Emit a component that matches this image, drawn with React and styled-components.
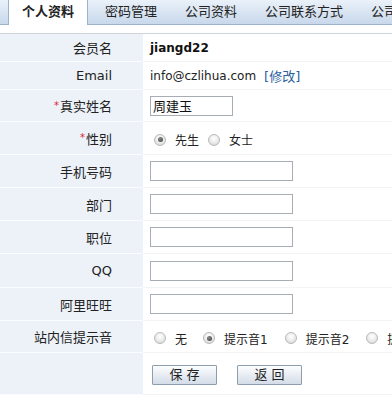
import React from 'react';
import styled, { createGlobalStyle } from 'styled-components';

const GlobalStyle = createGlobalStyle`
  body {
    margin: 0;
    background: #ffffff;
    font-family: 'DejaVu Sans', 'Noto Sans CJK SC', sans-serif;
    font-size: 12px;
    color: #222;
  }
`;

const Page = styled.div`
  width: 392px;
  height: 398px;
  overflow: hidden;
`;

const TabBar = styled.div`
  display: flex;
  height: 24px;
  padding-left: 8px;
  background: linear-gradient(#eaf1f9, #c8d8eb);
  border-bottom: 1px solid #9db2cb;
  white-space: nowrap;
`;

const Tab = styled.div`
  flex: none;
  padding: 0 14px;
  line-height: 24px;
  font-size: 13px;
  color: #222;
  ${(p) =>
    p.$active &&
    `
    height: 25px;
    margin-right: 3px;
    padding: 0 13px;
    background: #ffffff;
    font-weight: bold;
    border-left: 1px solid #9db2cb;
    border-right: 1px solid #9db2cb;
  `}
`;

const Form = styled.div`
  margin-top: 8px;
  border-top: 1px solid #cfd4da;
`;

const Row = styled.div`
  display: grid;
  grid-template-columns: 143px 1fr;
  height: ${(p) => p.$h}px;
`;

const Label = styled.div`
  display: flex;
  align-items: center;
  justify-content: flex-end;
  padding-right: 31px;
  background: #edf2f9;
  border-bottom: 1px solid #fafcff;
  font-size: 13px;
  color: #222;
`;

const Star = styled.span`
  color: #e0203a;
  font-size: 10px;
  align-self: flex-start;
  margin-top: ${(p) => p.$top}px;
  margin-right: 1px;
`;

const Value = styled.div`
  display: flex;
  align-items: center;
  padding-left: 7px;
  border-bottom: 1px solid #f3f4f6;
  white-space: nowrap;
  font-size: 12px;
`;

const UserName = styled.span`
  font-weight: bold;
  color: #111;
`;

const EditLink = styled.a`
  margin-left: 8px;
  color: #2d5f9e;
  font-size: 13px;
  text-decoration: none;
`;

const TextInput = styled.input`
  box-sizing: border-box;
  width: ${(p) => p.$w}px;
  height: 20px;
  margin: 0;
  padding: 0 2px;
  border: 1px solid #a7adb5;
  font-family: 'DejaVu Sans', 'Noto Sans CJK SC', sans-serif;
  font-size: 13px;
  color: #111;
  outline: none;
`;

const RadioGroup = styled.div`
  display: flex;
  align-items: center;
  margin-left: 4px;
  margin-top: 3px;
`;

const RadioItem = styled.label`
  display: flex;
  align-items: center;
  margin-right: ${(p) => p.$gap}px;
  font-size: 12px;
  color: #222;
`;

const RadioDot = styled.span`
  box-sizing: border-box;
  width: 12px;
  height: 12px;
  margin-right: 9px;
  border-radius: 50%;
  border: 1px solid #b9b9b9;
  background: radial-gradient(circle at 50% 35%, #ffffff 0%, #eeeeee 45%, #d2d2d2 100%);
  display: flex;
  align-items: center;
  justify-content: center;
  &::after {
    content: '';
    width: 5px;
    height: 5px;
    border-radius: 50%;
    background: ${(p) => (p.$checked ? 'radial-gradient(circle at 40% 35%, #8a8a8a, #3c3c3c)' : 'transparent')};
  }
`;

const Buttons = styled.div`
  display: flex;
  gap: 20px;
  margin-left: 2px;
  margin-top: 2px;
`;

const Button = styled.button`
  width: 65px;
  height: 20px;
  padding: 0;
  border: 1px solid #8e9eaf;
  border-radius: 1px;
  background: linear-gradient(#fcfdfe, #e6ebf2 55%, #d3dce8);
  font-family: 'DejaVu Sans', 'Noto Sans CJK SC', sans-serif;
  font-size: 13px;
  color: #222;
  line-height: 18px;
`;

const tabs = ['个人资料', '密码管理', '公司资料', '公司联系方式', '公司介绍'];

function Radio({ label, checked, gap }) {
  return (
    <RadioItem $gap={gap}>
      <RadioDot $checked={checked} />
      {label}
    </RadioItem>
  );
}

export default function App() {
  return (
    <Page>
      <GlobalStyle />
      <TabBar>
        {tabs.map((t, i) => (
          <Tab key={t} $active={i === 0}>
            {t}
          </Tab>
        ))}
      </TabBar>
      <Form>
        <Row $h={28}>
          <Label>会员名</Label>
          <Value>
            <UserName>jiangd22</UserName>
          </Value>
        </Row>
        <Row $h={28}>
          <Label>Email</Label>
          <Value>
            info@czlihua.com
            <EditLink href="#">[修改]</EditLink>
          </Value>
        </Row>
        <Row $h={32}>
          <Label>
            <Star $top={10}>*</Star>真实姓名
          </Label>
          <Value>
            <TextInput $w={83} defaultValue="周建玉" />
          </Value>
        </Row>
        <Row $h={33}>
          <Label>
            <Star $top={10}>*</Star>性别
          </Label>
          <Value>
            <RadioGroup>
              <Radio label="先生" checked gap={9} />
              <Radio label="女士" gap={9} />
            </RadioGroup>
          </Value>
        </Row>
        <Row $h={33}>
          <Label>手机号码</Label>
          <Value>
            <TextInput $w={143} />
          </Value>
        </Row>
        <Row $h={33}>
          <Label>部门</Label>
          <Value>
            <TextInput $w={143} />
          </Value>
        </Row>
        <Row $h={33}>
          <Label>职位</Label>
          <Value>
            <TextInput $w={143} />
          </Value>
        </Row>
        <Row $h={34}>
          <Label>QQ</Label>
          <Value>
            <TextInput $w={143} />
          </Value>
        </Row>
        <Row $h={33}>
          <Label>阿里旺旺</Label>
          <Value>
            <TextInput $w={143} />
          </Value>
        </Row>
        <Row $h={32}>
          <Label>站内信提示音</Label>
          <Value>
            <RadioGroup>
              <Radio label="无" gap={16} />
              <Radio label="提示音1" checked gap={17} />
              <Radio label="提示音2" gap={17} />
              <Radio label="提示音3" gap={17} />
            </RadioGroup>
          </Value>
        </Row>
        <Row $h={42}>
          <Label />
          <Value>
            <Buttons>
              <Button>保 存</Button>
              <Button>返 回</Button>
            </Buttons>
          </Value>
        </Row>
      </Form>
    </Page>
  );
}
